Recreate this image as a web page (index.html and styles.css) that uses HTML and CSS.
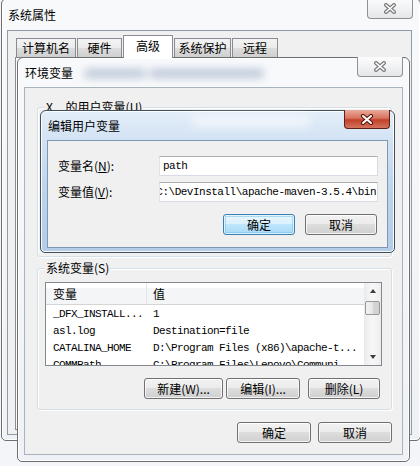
FILE: index.html
```html
<!DOCTYPE html>
<html>
<head>
<meta charset="utf-8">
<link rel="stylesheet" href="styles.css">
</head>
<body>
<div class="win sys">
  <div class="titlebar">
    <span class="title">系统属性</span>
    <div class="close"><svg width="14" height="11" viewBox="0 0 14 11"><path d="M3 2 L11 9 M11 2 L3 9" stroke="#7c7c7c" stroke-width="4" stroke-linecap="round"/><path d="M3 2 L11 9 M11 2 L3 9" stroke="#fff" stroke-width="1.6" stroke-linecap="round"/></svg></div>
  </div>
  <div class="content sys-content">
    <div class="tabs">
      <div class="tab t1">计算机名</div>
      <div class="tab t2">硬件</div>
      <div class="tab t3 sel">高级</div>
      <div class="tab t4">系统保护</div>
      <div class="tab t5">远程</div>
    </div>
    <div class="tabpanel"></div>
  </div>
</div>

<div class="win env">
  <div class="titlebar">
    <span class="title">环境变量</span>
    <div class="blur b1"></div>
    <div class="blur b2"></div>
    <div class="close"><svg width="14" height="11" viewBox="0 0 14 11"><path d="M3 2 L11 9 M11 2 L3 9" stroke="#7c7c7c" stroke-width="4" stroke-linecap="round"/><path d="M3 2 L11 9 M11 2 L3 9" stroke="#fff" stroke-width="1.6" stroke-linecap="round"/></svg></div>
  </div>
  <div class="content env-content">
    <div class="group user-group">
      <span class="legend">X... 的用户变量(U)</span>
    </div>
    <div class="group sys-group">
      <span class="legend">系统变量(S)</span>
      <div class="listbox">
        <div class="list-main">
          <div class="lhead">
            <div class="c1">变量</div>
            <div class="c2">值</div>
          </div>
          <div class="row"><div class="c1">_DFX_INSTALL...</div><div class="c2">1</div></div>
          <div class="row"><div class="c1">asl.log</div><div class="c2">Destination=file</div></div>
          <div class="row"><div class="c1">CATALINA_HOME</div><div class="c2">D:\Program Files (x86)\apache-t...</div></div>
          <div class="row"><div class="c1">COMMPath</div><div class="c2">C:\Program Files\Lenovo\Communi</div></div>
        </div>
        <div class="vscroll">
          <div class="arrow up"></div>
          <div class="thumb"></div>
          <div class="track"></div>
          <div class="arrow down"></div>
        </div>
      </div>
      <div class="btnrow">
        <div class="btn w79">新建(W)...</div>
        <div class="btn w74 g3">编辑(I)...</div>
        <div class="btn w72 g8">删除(L)</div>
      </div>
    </div>
    <div class="btnrow bottom">
      <div class="btn w74">确定</div>
      <div class="btn w74 g7">取消</div>
    </div>
  </div>
</div>

<div class="win edit">
  <div class="titlebar">
    <span class="title">编辑用户变量</span>
    <div class="blur e1"></div>
    <div class="close red"><svg width="14" height="11" viewBox="0 0 14 11"><path d="M3 2 L11 9 M11 2 L3 9" stroke="#5a1a10" stroke-width="4.2" stroke-linecap="round"/><path d="M3 2 L11 9 M11 2 L3 9" stroke="#fff" stroke-width="2" stroke-linecap="round"/></svg></div>
  </div>
  <div class="content edit-content">
    <div class="frow">
      <span class="flabel">变量名(<u>N</u>):</span>
      <div class="input"><span>path</span></div>
    </div>
    <div class="frow">
      <span class="flabel">变量值(<u>V</u>):</span>
      <div class="input scrolled"><span>C:\DevInstall\apache-maven-3.5.4\bin</span></div>
    </div>
    <div class="btnrow editbtns">
      <div class="btn w72 focus">确定</div>
      <div class="btn w72 g10">取消</div>
    </div>
  </div>
</div>
</body>
</html>
```

FILE: styles.css
```css
html, body {
  margin: 0;
  padding: 0;
}
body {
  width: 420px;
  height: 466px;
  overflow: hidden;
  position: relative;
  background: #f3f5f8;
  font-family: "Noto Sans CJK SC", "Noto Sans", sans-serif;
  font-size: 12px;
  color: #000;
}

.win {
  position: absolute;
  box-sizing: border-box;
  display: flex;
  flex-direction: column;
  border: 1px solid #6e6e6e;
  border-radius: 6px 6px 5px 5px;
  background: linear-gradient(180deg, #f8f9fb 0%, #eef1f5 100%);
  box-shadow: inset 0 0 0 1px rgba(255, 255, 255, 0.9);
}

.titlebar {
  flex: none;
  position: relative;
  display: flex;
  align-items: center;
  line-height: 14px;
}
.title {
  position: relative;
  z-index: 2;
}

.close {
  position: absolute;
  top: -1px;
  width: 46px;
  height: 20px;
  box-sizing: border-box;
  border: 1px solid #8e9094;
  border-top: none;
  border-radius: 0 0 4px 4px;
  background: linear-gradient(180deg, #fbfbfc 0%, #f1f2f4 50%, #e4e6e9 100%);
  display: flex;
  align-items: center;
  justify-content: center;
  z-index: 3;
}
.close svg { display: block; }
.close.red {
  height: 19px;
  border-color: #5e2117;
  background: linear-gradient(180deg, #e9a99b 0%, #d7735f 45%, #c2412b 55%, #d4735c 100%);
}

.content {
  flex: 1;
  box-sizing: border-box;
  background: #f0f0f0;
  display: flex;
  flex-direction: column;
}

/* ---- System properties ---- */
.sys {
  left: 1px;
  top: -2px;
  width: 420px;
  height: 443px;
}
.sys .titlebar {
  height: 31px;
  padding-left: 6px;
}
.sys .close { right: 7px; top: 0; }
.sys-content {
  margin: 0 8px 5px 5px;
  border: 1px solid #8f9ba8;
  padding: 4px 6px 4px 7px;
}
.tabs {
  display: flex;
  align-items: flex-end;
  height: 22px;
  padding-left: 1px;
  position: relative;
  z-index: 2;
}
.tab {
  box-sizing: border-box;
  height: 19px;
  border: 1px solid #898c95;
  border-bottom: none;
  background: linear-gradient(180deg, #f3f3f3 0%, #ebebeb 50%, #dddddd 51%, #cfcfcf 100%);
  display: flex;
  align-items: center;
  justify-content: center;
  margin-right: 1px;
  line-height: 14px;
}
.tab.sel {
  height: 23px;
  margin-bottom: -1px;
  background: #fff;
  align-items: flex-start;
  padding-top: 3px;
}
.t1 { width: 60px; }
.t2 { width: 45px; }
.t3 { width: 50px; }
.t4 { width: 57px; }
.t5 { width: 46px; }
.tabpanel {
  flex: 1;
  border: 1px solid #898c95;
  background: #fcfcfc;
}

/* ---- Environment variables ---- */
.env {
  left: 17px;
  top: 57px;
  width: 393px;
  height: 405px;
}
.env .titlebar {
  height: 29px;
  padding-left: 7px;
}
.env .close { right: 6px; }
.blur {
  position: absolute;
  top: 11px;
  height: 9px;
  background: rgba(100, 125, 165, 0.4);
  filter: blur(4px);
  border-radius: 5px;
}
.b1 { left: 66px; width: 62px; }
.b2 { left: 131px; width: 115px; }
.e1 {
  left: 150px;
  width: 120px;
  top: 4px;
  height: 12px;
  background: rgba(255, 255, 255, 0.55);
  filter: blur(5px);
}

.env-content {
  margin: 0 6px 6px 6px;
  border: 1px solid #a9b3be;
  padding: 0 10px 0 12px;
}
.group {
  position: relative;
  box-sizing: border-box;
  border: 1px solid #d5dfe5;
  border-radius: 3px;
  box-shadow: inset 1px 1px 0 #fff, 1px 1px 0 #fff;
}
.legend {
  position: absolute;
  top: -8px;
  left: 7px;
  padding: 0 1px;
  background: #f0f0f0;
  line-height: 14px;
}
.user-group {
  margin-top: 19px;
  height: 150px;
}
.sys-group {
  margin-top: 11px;
  height: 142px;
  padding: 13px 9px 0 7px;
}
.listbox {
  box-sizing: border-box;
  height: 84px;
  border: 1px solid #828790;
  background: #fff;
  display: flex;
  overflow: hidden;
}
.list-main {
  flex: 1;
  overflow: hidden;
}
.lhead {
  display: flex;
  height: 22px;
  box-sizing: border-box;
  border-bottom: 1px solid #d5d5d5;
  background: linear-gradient(180deg, #ffffff 0%, #ffffff 25%, #f4f5f7 26%, #f4f5f7 100%);
  align-items: center;
  line-height: 14px;
}
.lhead .c1 {
  border-right: 1px solid #e2e6eb;
  height: 100%;
  display: flex;
  align-items: center;
}
.c1 {
  box-sizing: border-box;
  width: 101px;
  flex: none;
  padding-left: 7px;
  white-space: nowrap;
}
.c2 {
  padding-left: 6px;
  white-space: nowrap;
}
.row {
  display: flex;
  height: 17px;
  align-items: center;
  font-family: "Liberation Mono", monospace;
  font-size: 11px;
  letter-spacing: -0.6px;
}
.vscroll {
  width: 17px;
  flex: none;
  display: flex;
  flex-direction: column;
  align-items: center;
  background: linear-gradient(90deg, #e9e9e9, #f6f6f6 40%, #f6f6f6 60%, #ececec);
}
.arrow {
  width: 0;
  height: 0;
  border-left: 3.5px solid transparent;
  border-right: 3.5px solid transparent;
  flex: none;
}
.arrow.up {
  margin-top: 6px;
  border-bottom: 4px solid #3c3c3c;
}
.arrow.down {
  margin-bottom: 6px;
  border-top: 4px solid #3c3c3c;
}
.thumb {
  margin-top: 8px;
  width: 15px;
  height: 14px;
  box-sizing: border-box;
  border: 1px solid #979797;
  border-radius: 2px;
  background: linear-gradient(90deg, #f2f2f2, #e7e7e7 50%, #d6d6d6 51%, #d0d0d0);
  flex: none;
}
.track { flex: 1; }

.btnrow {
  display: flex;
  justify-content: flex-end;
}
.sys-group .btnrow {
  margin-top: 12px;
  padding-right: 2px;
}
.btnrow.bottom {
  margin-top: 12px;
}
.btn {
  box-sizing: border-box;
  height: 21px;
  border: 1px solid #707070;
  border-radius: 3px;
  background: linear-gradient(180deg, #f2f2f2 0%, #ebebeb 49%, #dddddd 50%, #cfcfcf 100%);
  box-shadow: inset 0 0 0 1px rgba(255, 255, 255, 0.75);
  display: flex;
  align-items: center;
  justify-content: center;
  line-height: 14px;
  white-space: nowrap;
}
.btn.focus {
  border-color: #3c7fb1;
  background: linear-gradient(180deg, #eaf6fd 0%, #d9f0fc 49%, #bee6fd 50%, #a7d9f5 100%);
  box-shadow: inset 0 0 0 1px rgba(255, 255, 255, 0.7), inset 0 0 0 2px rgba(110, 190, 235, 0.5);
}
.w72 { width: 72px; }
.w74 { width: 74px; }
.w79 { width: 79px; }
.g3 { margin-left: 3px; }
.g7 { margin-left: 7px; }
.g8 { margin-left: 8px; }
.g10 { margin-left: 10px; }

/* ---- Edit user variable ---- */
.edit {
  left: 40px;
  top: 110px;
  width: 355px;
  height: 143px;
  border-color: #3f4e5c;
  background: linear-gradient(180deg, #e4eef9 0%, #cfe0f2 25%, #bcd3ec 60%, #b3cce8 100%);
}
.edit .titlebar {
  height: 29px;
  padding-left: 7px;
}
.edit .close { right: 4px; }
.edit-content {
  margin: 0 6px 4px 6px;
  border: 1px solid #7e97b3;
  padding: 15px 9px 0 10px;
}
.frow {
  display: flex;
  align-items: center;
  height: 20px;
  margin-bottom: 6px;
}
.flabel {
  width: 101px;
  flex: none;
  line-height: 14px;
}
.flabel u { text-decoration: underline; }
.input {
  flex: 1;
  height: 20px;
  box-sizing: border-box;
  border: 1px solid #d7dce4;
  border-top-color: #abadb3;
  border-left-color: #e2e3ea;
  background: #fff;
  display: flex;
  align-items: center;
  overflow: hidden;
  padding: 0 3px;
  font-family: "Liberation Mono", monospace;
  font-size: 11px;
  letter-spacing: -0.5px;
  white-space: nowrap;
}
.input span { flex: none; }
.input.scrolled {
  justify-content: flex-end;
  padding-right: 1px;
}
.editbtns {
  margin-top: 6px;
  padding-right: 1px;
}
```
